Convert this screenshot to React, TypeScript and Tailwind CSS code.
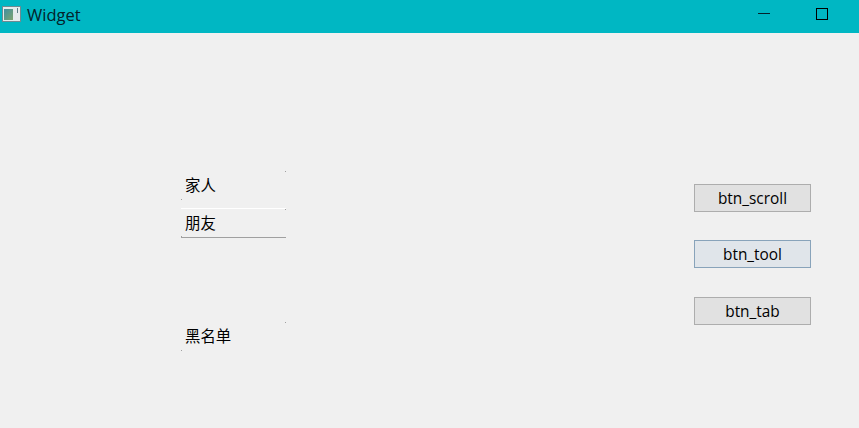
import React from "react";

const FONT = { fontFamily: '"Open Sans", "Noto Sans CJK SC", sans-serif' };

// 3d-style frame of the tool buttons: only the corner dots show
const CornerDots: React.FC = () => (
  <>
    <span className="absolute top-0 right-0 h-px w-px bg-[#a0a0a0]" />
    <span className="absolute bottom-0 left-0 h-px w-px bg-[#a0a0a0]" />
  </>
);

const ToolItem: React.FC<{ label: string; className?: string }> = ({ label, className }) => (
  <div className={`relative flex h-[29px] w-[105px] items-center pl-1 text-[15.4px] text-black ${className ?? ""}`}>
    {label}
    <CornerDots />
  </div>
);

const PushButton: React.FC<{ label: string; active?: boolean; className?: string }> = ({ label, active, className }) => (
  <button
    className={`h-[28px] w-[117px] border pt-px text-[15.4px] text-black ${
      active ? "border-[#88a3ba] bg-[#e0e5ea]" : "border-[#adadad] bg-[#e1e1e1]"
    } ${className ?? ""}`}
  >
    {label}
  </button>
);

const App: React.FC = () => {
  return (
    <div className="flex h-[428px] w-[859px] flex-col overflow-hidden bg-[#f0f0f0]" style={FONT}>
      <header className="flex h-[33px] items-start justify-between bg-[#00b7c3]">
        <div className="flex items-center pt-[3px]">
          <svg width="19" height="17" viewBox="0 0 19 17" className="ml-[2px] -mt-[2px]">
            <defs>
              <linearGradient id="pane" x1="0" y1="0" x2="1" y2="1">
                <stop offset="0" stopColor="#3f8fa0" />
                <stop offset="1" stopColor="#7fa56f" />
              </linearGradient>
            </defs>
            <rect x="0.5" y="0.5" width="18" height="15" fill="#e6ecec" stroke="#6f8a92" />
            <rect x="2" y="3" width="9" height="11" fill="url(#pane)" />
            <rect x="15" y="2" width="1" height="5" fill="#5f7f88" />
          </svg>
          <span className="ml-[6px] text-[16.5px] text-[#04222a]">Widget</span>
        </div>
        <div className="flex items-start pt-[8px]">
          <div className="mt-[5px] h-px w-[12px] bg-[#04222a]" />
          <div className="ml-[46px] mr-[31px] h-[12px] w-[12px] border border-black" />
        </div>
      </header>
      <main className="flex flex-1 justify-between pl-[181px] pr-[48px]">
        <div className="flex flex-col pt-[138px]">
          <ToolItem label="家人" />
          <div className="mt-[8px] h-px w-[105px] bg-white" />
          <ToolItem label="朋友" className="border-b border-[#a0a0a0] pt-px" />
          <ToolItem label="黑名单" className="mt-[84px]" />
        </div>
        <div className="flex flex-col pt-[151px]">
          <PushButton label="btn_scroll" />
          <PushButton label="btn_tool" active className="mt-[28px]" />
          <PushButton label="btn_tab" className="mt-[29px]" />
        </div>
      </main>
    </div>
  );
};

export default App;
